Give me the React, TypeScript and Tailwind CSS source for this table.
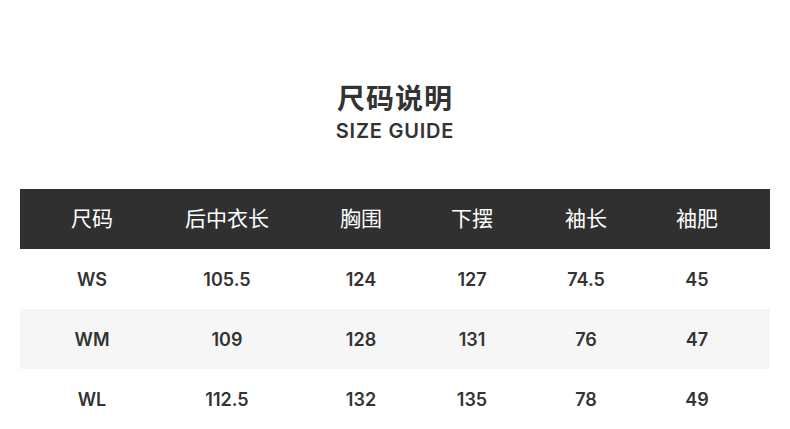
const HEADERS = ["尺码", "后中衣长", "胸围", "下摆", "袖长", "袖肥"];

const ROWS = [
  ["WS", "105.5", "124", "127", "74.5", "45"],
  ["WM", "109", "128", "131", "76", "47"],
  ["WL", "112.5", "132", "135", "78", "49"],
];

const GRID = "grid grid-cols-[144px_126px_142px_80px_148px_74px_1fr]";

export default function App() {
  return (
    <div className="w-[790px] h-[429px] bg-white overflow-hidden text-[#333] font-['Inter','Noto_Sans_CJK_SC',sans-serif]">
      <div className="flex flex-col items-center pt-[81px] h-[189px]">
        <h1 className="text-[28px] leading-[36px] font-bold tracking-[1px]">尺码说明</h1>
        <p className="text-[20px] leading-[26px] font-semibold tracking-[0.8px] mt-[1px]">SIZE GUIDE</p>
      </div>

      <div className="mx-[20px]">
        <div className={`${GRID} h-[60px] bg-[#303030] text-white text-[21px] items-center`}>
          {HEADERS.map((h) => (
            <div key={h} className="text-center">
              {h}
            </div>
          ))}
        </div>

        {ROWS.map((row, i) => (
          <div
            key={row[0]}
            className={`${GRID} h-[60px] items-center text-[18px] font-semibold ${
              i % 2 === 1 ? "bg-[#f6f6f6]" : "bg-white"
            }`}
          >
            {row.map((cell, j) => (
              <div key={j} className="text-center">
                {cell}
              </div>
            ))}
          </div>
        ))}
      </div>
    </div>
  );
}
